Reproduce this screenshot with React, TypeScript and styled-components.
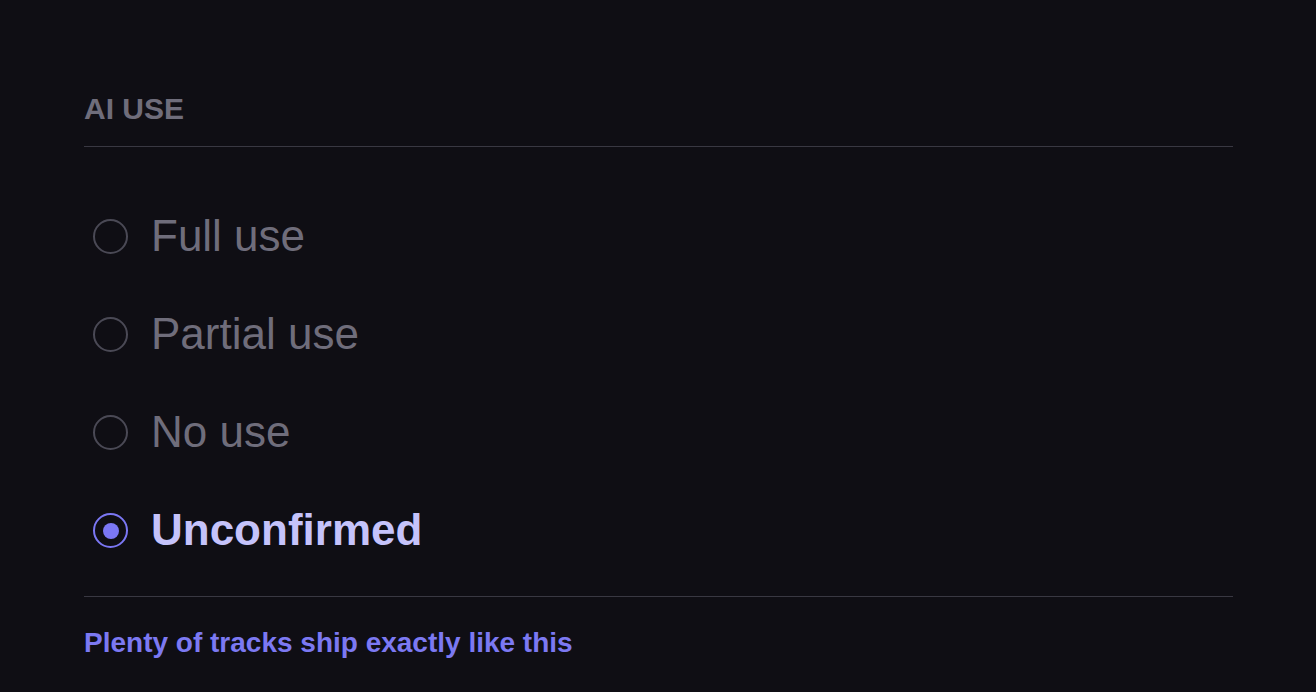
import { FC, useState } from "react";
import styled, { createGlobalStyle } from "styled-components";

const options = ["Full use", "Partial use", "No use", "Unconfirmed"];

const App: FC = () => {
  const [selected, setSelected] = useState("Unconfirmed");

  return (
    <>
      <GlobalStyle />
      <SPage>
        <SHeader>AI USE</SHeader>
        <SList>
          {options.map((opt) => (
            <SRow key={opt} onClick={() => setSelected(opt)}>
              <SRadio $active={selected === opt} />
              <SLabel $active={selected === opt}>{opt}</SLabel>
            </SRow>
          ))}
        </SList>
        <SNote>Plenty of tracks ship exactly like this</SNote>
      </SPage>
    </>
  );
};

export default App;

const GlobalStyle = createGlobalStyle`
  html, body {
    margin: 0;
    padding: 0;
    background: #0f0e14;
    font-family: "Liberation Sans", Arial, sans-serif;
  }
`;

const SPage = styled.div`
  width: 1149px;
  margin: 0 auto 0 84px;
  padding-top: 92px;
  min-height: 692px;
  box-sizing: border-box;
`;

const SHeader = styled.h2`
  margin: 0;
  font-size: 30px;
  line-height: 1.15;
  font-weight: 700;
  color: #6f6d7b;
  padding-bottom: 19px;
  border-bottom: 1px solid #393842;
`;

const SList = styled.div`
  display: flex;
  flex-direction: column;
  padding: 41px 0 16px;
  border-bottom: 1px solid #393842;
`;

const SRow = styled.label`
  display: flex;
  align-items: center;
  height: 98px;
  padding-left: 9px;
  gap: 23px;
  cursor: pointer;
`;

const SRadio = styled.span<{ $active: boolean }>`
  flex: none;
  width: 35px;
  height: 35px;
  box-sizing: border-box;
  border-radius: 50%;
  border: 2px solid ${(p) => (p.$active ? "#7b77f4" : "#4a4955")};
  display: flex;
  align-items: center;
  justify-content: center;
  &::after {
    content: "";
    width: 16px;
    height: 16px;
    border-radius: 50%;
    background: #7b77f4;
    display: ${(p) => (p.$active ? "block" : "none")};
  }
`;

const SLabel = styled.span<{ $active: boolean }>`
  font-size: 44px;
  line-height: 1.15;
  font-weight: ${(p) => (p.$active ? 700 : 400)};
  color: ${(p) => (p.$active ? "#c5c3fb" : "#6f6d7b")};
`;

const SNote = styled.p`
  margin: 0;
  padding-top: 30px;
  font-size: 28px;
  line-height: 1.15;
  font-weight: 700;
  color: #7c79f2;
`;
